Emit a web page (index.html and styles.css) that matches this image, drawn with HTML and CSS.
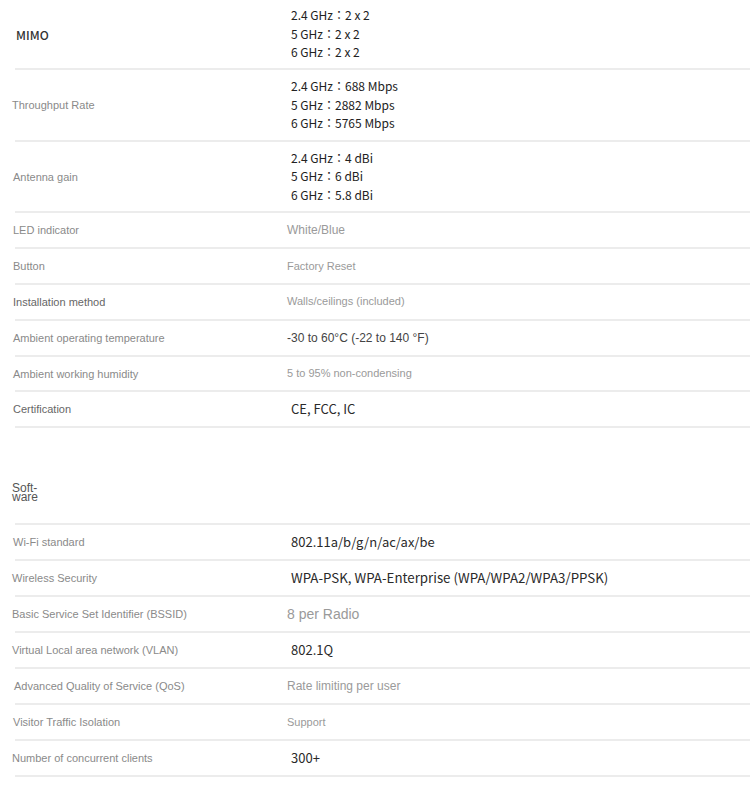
FILE: index.html
```html
<!DOCTYPE html>
<html>
<head>
<meta charset="utf-8">
<link rel="stylesheet" href="styles.css">
</head>
<body>
<div class="spec">
  <div class="row tall first">
    <div class="label strong">MIMO</div>
    <div class="value cjk small">
      <div>2.4 GHz：2 x 2</div>
      <div>5 GHz：2 x 2</div>
      <div>6 GHz：2 x 2</div>
    </div>
  </div>
  <div class="row tall">
    <div class="label l-12">Throughput Rate</div>
    <div class="value cjk small">
      <div>2.4 GHz：688 Mbps</div>
      <div>5 GHz：2882 Mbps</div>
      <div>6 GHz：5765 Mbps</div>
    </div>
  </div>
  <div class="row tall t71">
    <div class="label">Antenna gain</div>
    <div class="value cjk small">
      <div>2.4 GHz：4 dBi</div>
      <div>5 GHz：6 dBi</div>
      <div>6 GHz：5.8 dBi</div>
    </div>
  </div>
  <div class="row">
    <div class="label">LED indicator</div>
    <div class="value light v12">White/Blue</div>
  </div>
  <div class="row">
    <div class="label">Button</div>
    <div class="value light v11">Factory Reset</div>
  </div>
  <div class="row">
    <div class="label dark">Installation method</div>
    <div class="value light v11 up1">Walls/ceilings (included)</div>
  </div>
  <div class="row">
    <div class="label">Ambient operating temperature</div>
    <div class="value mid v12">-30 to 60°C (-22 to 140 °F)</div>
  </div>
  <div class="row t35">
    <div class="label">Ambient working humidity</div>
    <div class="value light v11 up1">5 to 95% non-condensing</div>
  </div>
  <div class="row">
    <div class="label dark">Certification</div>
    <div class="value cjk">CE, FCC, IC</div>
  </div>

  <div class="row section">
    <div class="label heading">Soft-<br>ware</div>
  </div>

  <div class="row">
    <div class="label">Wi-Fi standard</div>
    <div class="value cjk">802.11a/b/g/n/ac/ax/be</div>
  </div>
  <div class="row">
    <div class="label l-12">Wireless Security</div>
    <div class="value cjk wide">WPA-PSK, WPA-Enterprise (WPA/WPA2/WPA3/PPSK)</div>
  </div>
  <div class="row">
    <div class="label l-12">Basic Service Set Identifier (BSSID)</div>
    <div class="value light v14">8 per Radio</div>
  </div>
  <div class="row">
    <div class="label l-12">Virtual Local area network (VLAN)</div>
    <div class="value cjk">802.1Q</div>
  </div>
  <div class="row">
    <div class="label l-14">Advanced Quality of Service (QoS)</div>
    <div class="value light v12">Rate limiting per user</div>
  </div>
  <div class="row">
    <div class="label">Visitor Traffic Isolation</div>
    <div class="value light v11">Support</div>
  </div>
  <div class="row">
    <div class="label l-12">Number of concurrent clients</div>
    <div class="value cjk">300+</div>
  </div>
</div>
</body>
</html>
```

FILE: styles.css
```css
html, body {
  margin: 0;
  padding: 0;
  background: #ffffff;
}

body {
  font-family: "Liberation Sans", Arial, sans-serif;
  color: #888888;
}

.spec {
  padding-left: 15px;
  width: 735px;
}

.row {
  display: grid;
  grid-template-columns: 272px 1fr;
  align-items: center;
  height: 36px;
  box-sizing: border-box;
  border-bottom: 2px solid #ececec;
}

.row.tall {
  height: 72px;
}

.row.tall.first {
  height: 70px;
}

.row.t71 {
  height: 71px;
}

.row.t35 {
  height: 35px;
}

.row.section {
  height: 97px;
  align-items: start;
}

.label {
  font-size: 11px;
  color: #8a8a8a;
  margin-left: -2px;
  white-space: nowrap;
}

.label.l-12 {
  margin-left: -3px;
}

.label.l-14 {
  margin-left: -1px;
}

.label.dark {
  color: #666666;
}

.label.strong {
  font-family: "Noto Sans CJK KR", "Noto Sans", sans-serif;
  font-size: 12px;
  font-weight: 500;
  color: #333333;
  margin-left: 1px;
}

.label.heading {
  font-size: 12px;
  line-height: 9px;
  color: #555555;
  margin-left: -3px;
  padding-top: 56px;
}

.value {
  white-space: nowrap;
}

.value.cjk {
  font-family: "Noto Sans CJK KR", "Noto Sans", sans-serif;
  font-size: 13px;
  line-height: 18.5px;
  color: #2a2a2a;
  margin-left: 4px;
}

.value.cjk.small {
  font-size: 12px;
  color: #222222;
}

.value.cjk.wide {
  font-size: 13.3px;
}

.value.light {
  color: #9a9a9a;
}

.value.mid {
  color: #444444;
}

.value.v11 {
  font-size: 11px;
}

.value.v12 {
  font-size: 12px;
}

.value.v14 {
  font-size: 14px;
}

.value.up1 {
  margin-bottom: 2px;
}
```
